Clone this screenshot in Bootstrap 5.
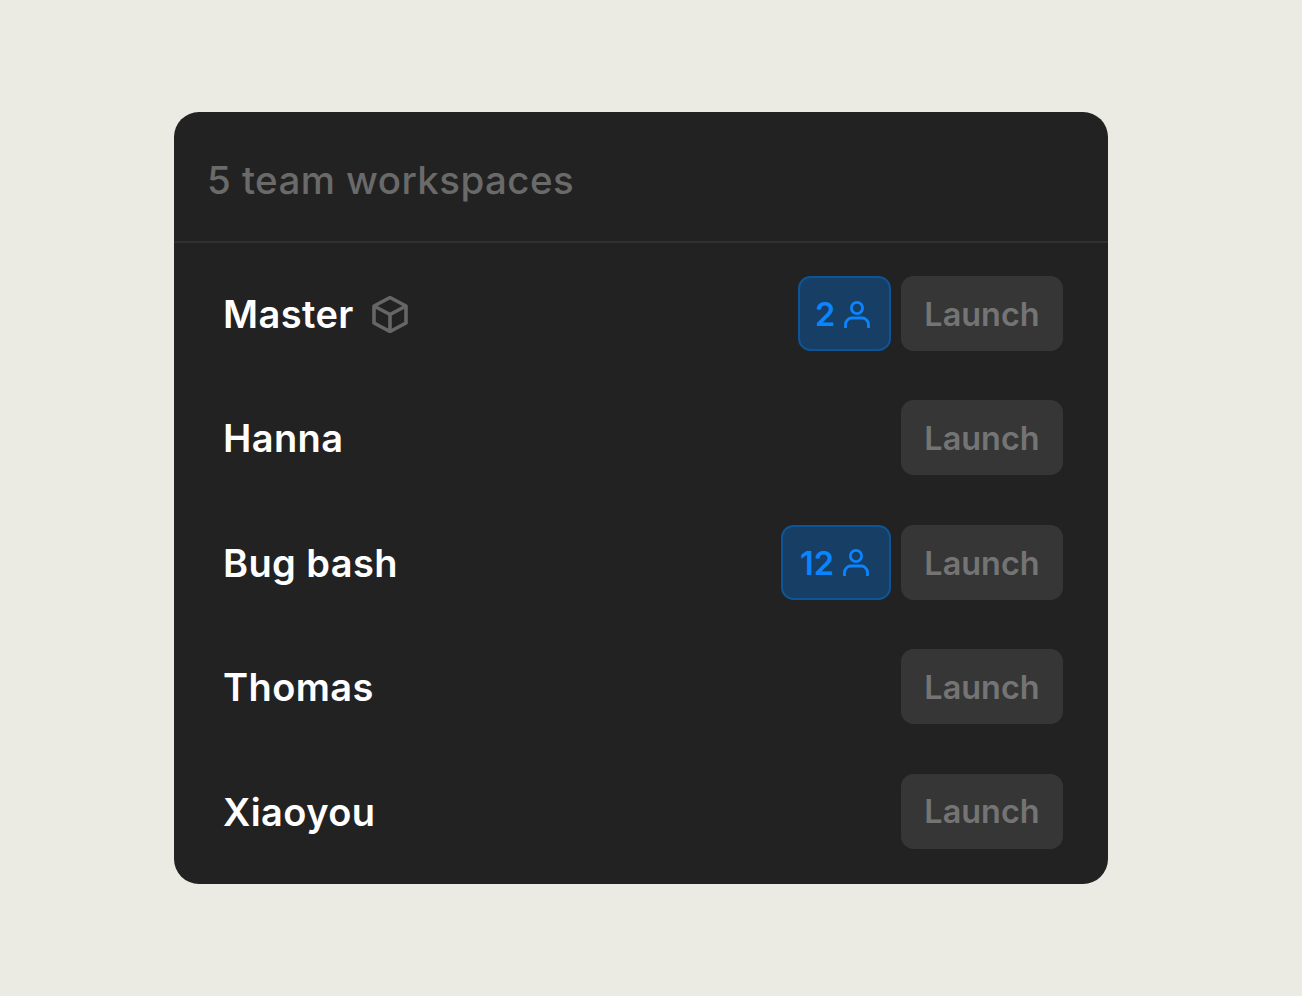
<!DOCTYPE html>
<html lang="en">
<head>
  <meta charset="UTF-8">
  <title>Team workspaces</title>
  <link href="https://cdn.jsdelivr.net/npm/bootstrap@5.3.3/dist/css/bootstrap.min.css" rel="stylesheet">
  <script src="https://cdn.jsdelivr.net/npm/bootstrap@5.3.3/dist/js/bootstrap.bundle.min.js"></script>
  <style>
    html, body { height: 100%; }
    body { background: #ecebe3; font-family: Inter, "Liberation Sans", sans-serif; }
    .page-wrap { padding-top: 112px; padding-left: 174px; }
    .ws-panel { width: 934px; height: 772px; background: #222222; border-radius: 25px; }
    .ws-head { height: 131px; padding-left: 33px; padding-top: 42px; border-bottom: 2px solid #303030; color: #6a6a6a; font-size: 38.500px; font-weight: 500; letter-spacing: 0.42px; line-height: 52px; }
    .ws-list { padding: 33px 45px 0 49px; gap: 49.4px; }
    .ws-row { height: 75px; }
    .ws-name { color: #ffffff; font-size: 38px; font-weight: 600; letter-spacing: 0.4px; line-height: 52px; padding-top: 1px; }
    .ws-cube { width: 38px; height: 38px; margin-left: 17px; }
    .btn-launch { width: 162px; height: 75px; padding: 3px 0 0; border: 0; border-radius: 12.5px; background: #363636; color: #747474; font-size: 32.4px; font-weight: 600; line-height: 1; }
    .ws-count { height: 75px; margin-right: 10px; padding-top: 2px; border: 2px solid #0d5599; border-radius: 12.5px; background: #173e65; color: #0a84ff; font-size: 32.6px; font-weight: 600; line-height: 1; }
    .count-two { width: 93px; padding-left: 15px; }
    .count-twelve { width: 110px; padding-left: 17px; }
    .ws-person { width: 30px; height: 30px; margin-left: 7px; }
  </style>
</head>
<body>
  <div class="page-wrap">
    <div class="ws-panel">
      <div class="ws-head">5 team workspaces</div>
      <div class="ws-list d-flex flex-column">
        <div class="ws-row d-flex align-items-center">
          <span class="ws-name">Master</span>
          <svg class="ws-cube" viewBox="0 0 38 38" fill="none" stroke="#666666" stroke-width="3.6" stroke-linejoin="round"><path d="M19 2.500 35 11v17L19 36.500 3 28V11Z"/><path d="M3 11 19 19.500 35 11M19 19.500V36.500"/></svg>
          <span class="ws-count count-two d-flex align-items-center ms-auto">2<svg class="ws-person" viewBox="0 0 30 30" fill="none" stroke="#0a84ff" stroke-width="2.8"><circle cx="15" cy="8" r="5.600"/><path d="M3.500 28v-3.500a6.500 6.500 0 0 1 6.500-6.500h10a6.500 6.500 0 0 1 6.500 6.500V28"/></svg></span>
          <button class="btn-launch" type="button">Launch</button>
        </div>
        <div class="ws-row d-flex align-items-center">
          <span class="ws-name">Hanna</span>
          <button class="btn-launch ms-auto" type="button">Launch</button>
        </div>
        <div class="ws-row d-flex align-items-center">
          <span class="ws-name">Bug bash</span>
          <span class="ws-count count-twelve d-flex align-items-center ms-auto">12<svg class="ws-person" viewBox="0 0 30 30" fill="none" stroke="#0a84ff" stroke-width="2.8"><circle cx="15" cy="8" r="5.600"/><path d="M3.500 28v-3.500a6.500 6.500 0 0 1 6.500-6.500h10a6.500 6.500 0 0 1 6.500 6.500V28"/></svg></span>
          <button class="btn-launch" type="button">Launch</button>
        </div>
        <div class="ws-row d-flex align-items-center">
          <span class="ws-name">Thomas</span>
          <button class="btn-launch ms-auto" type="button">Launch</button>
        </div>
        <div class="ws-row d-flex align-items-center">
          <span class="ws-name">Xiaoyou</span>
          <button class="btn-launch ms-auto" type="button">Launch</button>
        </div>
      </div>
    </div>
  </div>
</body>
</html>
